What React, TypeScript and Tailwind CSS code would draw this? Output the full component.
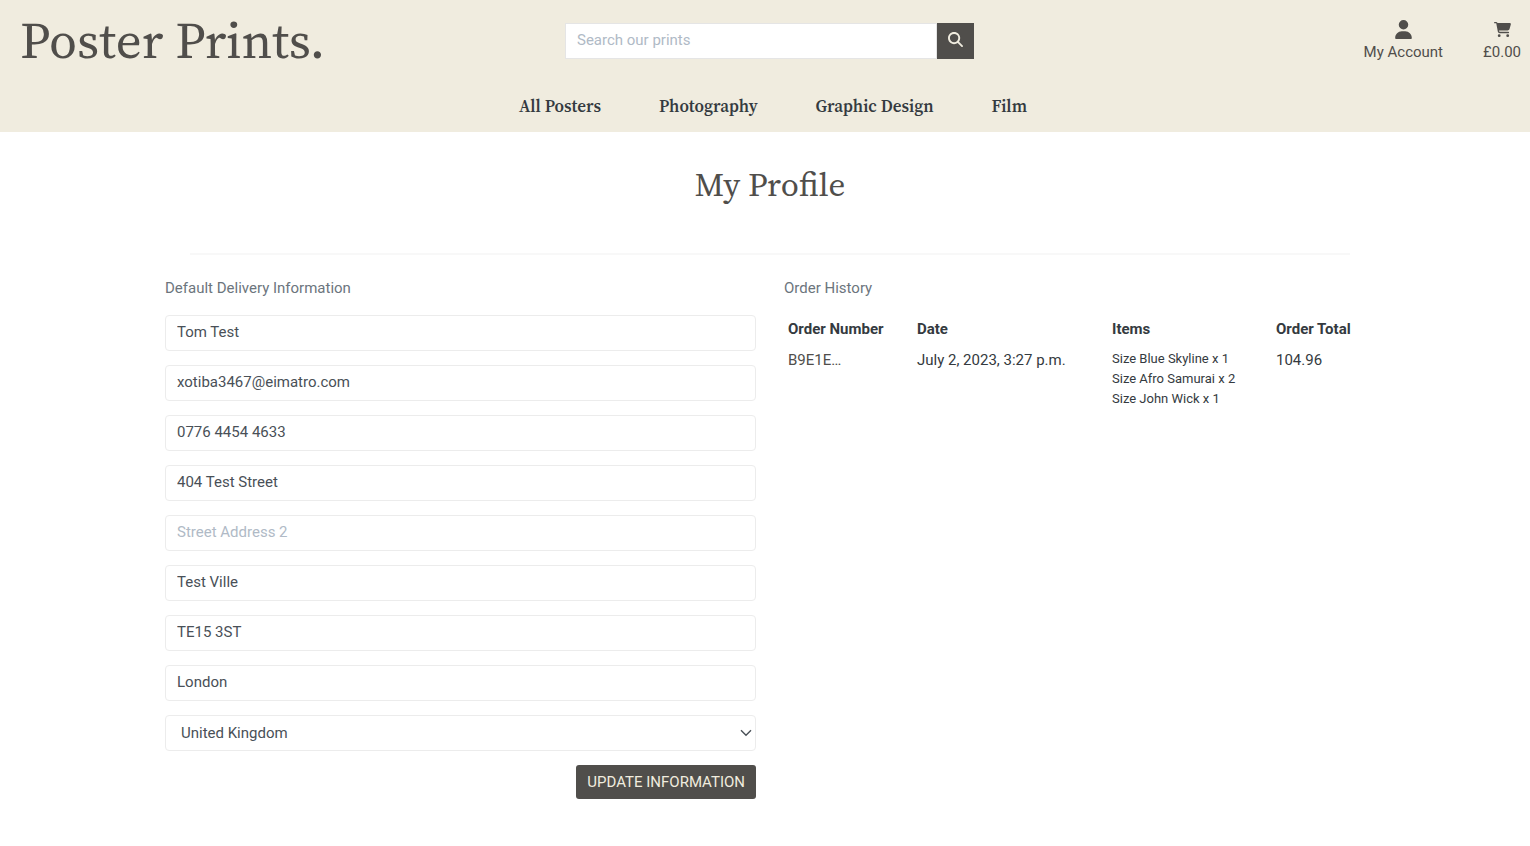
import type { ReactNode } from "react";
import { FaCartShopping, FaMagnifyingGlass, FaUser } from "react-icons/fa6";

const serif =
  "font-['Source_Serif_Pro','Source_Serif_4','Liberation_Serif',serif] [font-optical-sizing:none]";

const categories = ["All Posters", "Photography", "Graphic Design", "Film"];

const fields = [
  { id: "full-name", label: "Full Name", value: "Tom Test" },
  { id: "email", label: "Email Address", value: "xotiba3467@eimatro.com" },
  { id: "phone", label: "Phone Number", value: "0776 4454 4633" },
  { id: "street1", label: "Street Address 1", value: "404 Test Street" },
  { id: "street2", label: "Street Address 2", value: "" },
  { id: "town", label: "Town or City", value: "Test Ville" },
  { id: "postcode", label: "Postal Code", value: "TE15 3ST" },
  { id: "county", label: "County", value: "London" },
];

const orders = [
  {
    number: "B9E1E…",
    date: "July 2, 2023, 3:27 p.m.",
    items: ["Size Blue Skyline x 1", "Size Afro Samurai x 2", "Size John Wick x 1"],
    total: "104.96",
  },
];

function HeaderLink({ icon, text }: { icon: ReactNode; text: string }) {
  return (
    <a href="#" className="flex flex-col items-center">
      <span className="flex h-[22px] items-center">{icon}</span>
      <span className="leading-6">{text}</span>
    </a>
  );
}

function Header() {
  return (
    <header className="h-[132px] bg-[#f0ecdf] pt-[17px] text-[#504e4b]">
      <div className="grid grid-cols-[1fr_minmax(200px,409px)_1fr] items-center pr-[9px] pl-[18px]">
        <a
          href="#"
          className={`${serif} pb-[2px] pl-[2px] text-[51px] leading-[46px] whitespace-nowrap`}
        >
          Poster Prints.
        </a>
        <form className="flex h-9" onSubmit={(e) => e.preventDefault()}>
          <input
            type="search"
            aria-label="Search our prints"
            placeholder="Search our prints"
            className="min-w-0 flex-1 border border-[#e5e5e5] bg-white px-[11px] pb-[2px] text-[#495057] outline-none placeholder:text-[#b0bac6]"
          />
          <button
            type="submit"
            aria-label="Search"
            className="flex w-[37px] items-center justify-center bg-[#504e4b] pb-[3px] text-[#f0ecdf]"
          >
            <FaMagnifyingGlass size={15} />
          </button>
        </form>
        <div className="flex justify-end gap-10">
          <HeaderLink icon={<FaUser size={19} />} text="My Account" />
          <HeaderLink icon={<FaCartShopping size={17} />} text="£0.00" />
        </div>
      </div>
      <nav className={`${serif} mt-[29px] flex justify-center gap-[58px] pl-4 text-[17px] leading-6 font-semibold text-[#343a40]`}>
        {categories.map((name) => (
          <a key={name} href="#">
            {name}
          </a>
        ))}
      </nav>
    </header>
  );
}

function DeliveryForm() {
  return (
    <form onSubmit={(e) => e.preventDefault()}>
      <h2 className="mb-[15px] leading-6 text-[#6c757d]">Default Delivery Information</h2>
      <div className="flex flex-col gap-[14px]">
        {fields.map((field) => (
          <input
            key={field.id}
            id={field.id}
            aria-label={field.label}
            placeholder={field.label}
            defaultValue={field.value}
            className="h-9 w-full rounded-[4px] border border-[#ececec] px-[11px] pb-[2px] text-[#495057] outline-none placeholder:text-[#b0bac6]"
          />
        ))}
        <div className="relative">
          <select
            aria-label="Country"
            className="h-9 w-full appearance-none rounded-[4px] border border-[#ececec] bg-white px-[15px] text-[#495057] outline-none"
          >
            <option>United Kingdom</option>
          </select>
          <svg
            viewBox="0 0 12 8"
            className="pointer-events-none absolute top-[14px] right-1 h-2 w-3"
            fill="none"
            stroke="#495057"
            strokeWidth="1.4"
          >
            <path d="M1 1.2 6 6.2 11 1.2" />
          </svg>
        </div>
        <button
          type="submit"
          className="h-[34px] self-end rounded-[3px] bg-[#504e4b] px-[11px] text-[#f0ecdf] uppercase"
        >
          Update Information
        </button>
      </div>
    </form>
  );
}

function OrderHistory() {
  return (
    <section>
      <h2 className="mb-[14px] leading-6 text-[#6c757d]">Order History</h2>
      <table className="w-full text-left text-[#343a40]">
        <thead>
          <tr className="leading-[31px]">
            <th className="w-[129px] pl-1 font-bold">Order Number</th>
            <th className="w-[195px] pl-1 font-bold">Date</th>
            <th className="w-[164px] pl-1 font-bold">Items</th>
            <th className="pl-1 font-bold whitespace-nowrap">Order Total</th>
          </tr>
        </thead>
        <tbody>
          {orders.map((order) => (
            <tr key={order.number} className="align-top">
              <td className="pl-1 leading-[31px] text-[#504e4b]">
                <a href="#">{order.number}</a>
              </td>
              <td className="pl-1 leading-[31px]">{order.date}</td>
              <td className="pt-1 pl-1">
                <ul className="text-[13px] leading-5">
                  {order.items.map((item) => (
                    <li key={item}>{item}</li>
                  ))}
                </ul>
              </td>
              <td className="pl-1 leading-[31px]">{order.total}</td>
            </tr>
          ))}
        </tbody>
      </table>
    </section>
  );
}

export default function App() {
  return (
    <div className="min-h-screen bg-white font-['Roboto',sans-serif] text-[15px]">
      <Header />
      <main className="mx-auto max-w-[1240px] pt-8 pr-[10px] pl-5">
        <h1 className={`${serif} text-center text-[33px] leading-[42px] text-[#504e4b]`}>
          My Profile
        </h1>
        <hr className="mx-[25px] mt-[47px] mb-[21px] border-t-2 border-[#f8f8f8]" />
        <div className="grid grid-cols-2 gap-7">
          <DeliveryForm />
          <OrderHistory />
        </div>
      </main>
    </div>
  );
}
